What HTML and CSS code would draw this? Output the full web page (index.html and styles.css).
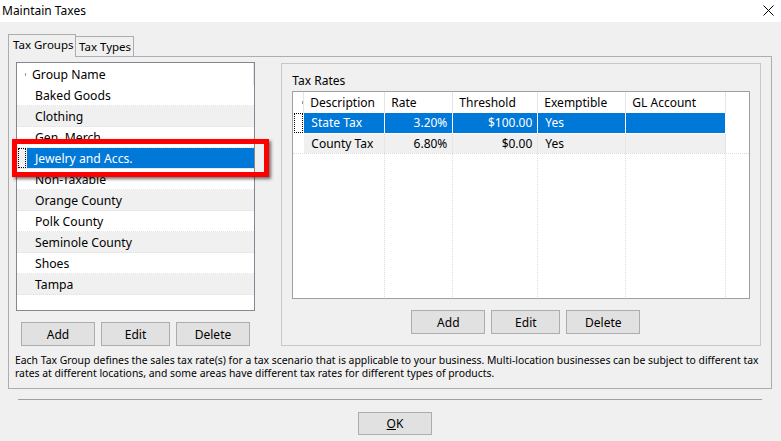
FILE: index.html
```html
<!DOCTYPE html>
<html>
<head>
<meta charset="utf-8">
<link rel="stylesheet" href="styles.css">
</head>
<body>
<div class="window">
  <div class="titlebar">
    <span class="title">Maintain Taxes</span>
    <svg class="close" width="11" height="11" viewBox="0 0 11 11"><path d="M0.5 0.5 L10.5 10.5 M10.5 0.5 L0.5 10.5" stroke="#000" stroke-width="1" fill="none"/></svg>
  </div>
  <div class="dialog">
    <div class="tabs">
      <div class="tab active">Tax Groups</div>
      <div class="tab">Tax Types</div>
    </div>
    <div class="panel">
      <div class="panel-body">
        <div class="left-col">
          <div class="listbox">
            <div class="lrow lheader"><span class="rh"><i class="tick"></i></span><span class="lcell hcell">Group Name</span></div>
            <div class="lrow"><span class="rh"></span><span class="lcell">Baked Goods</span></div>
            <div class="lrow alt"><span class="rh"></span><span class="lcell">Clothing</span></div>
            <div class="lrow"><span class="rh"></span><span class="lcell">Gen. Merch</span></div>
            <div class="lrow alt sel"><span class="rh"><i class="focus"></i></span><span class="lcell">Jewelry and Accs.</span></div>
            <div class="lrow"><span class="rh"></span><span class="lcell">Non-Taxable</span></div>
            <div class="lrow alt"><span class="rh"></span><span class="lcell">Orange County</span></div>
            <div class="lrow"><span class="rh"></span><span class="lcell">Polk County</span></div>
            <div class="lrow alt"><span class="rh"></span><span class="lcell">Seminole County</span></div>
            <div class="lrow"><span class="rh"></span><span class="lcell">Shoes</span></div>
            <div class="lrow alt"><span class="rh"></span><span class="lcell">Tampa</span></div>
          </div>
          <div class="btnrow left-btns">
            <button class="btn w74">Add</button>
            <button class="btn w69">Edit</button>
            <button class="btn w74">Delete</button>
          </div>
        </div>
        <div class="groupbox">
          <div class="gb-label">Tax Rates</div>
          <div class="grid">
            <div class="grow ghead">
              <span class="gc c-rh"><i class="tick"></i></span>
              <span class="gc c-desc">Description</span>
              <span class="gc c-rate">Rate</span>
              <span class="gc c-thr">Threshold</span>
              <span class="gc c-ex">Exemptible</span>
              <span class="gc c-gl">GL Account</span>
            </div>
            <div class="grow gsel">
              <span class="gc c-rh"><i class="focus"></i></span>
              <span class="gc c-desc">State Tax</span>
              <span class="gc c-rate num">3.20%</span>
              <span class="gc c-thr num">$100.00</span>
              <span class="gc c-ex">Yes</span>
              <span class="gc c-gl"></span>
            </div>
            <div class="grow galt">
              <span class="gc c-rh"></span>
              <span class="gc c-desc">County Tax</span>
              <span class="gc c-rate num">6.80%</span>
              <span class="gc c-thr num">$0.00</span>
              <span class="gc c-ex">Yes</span>
              <span class="gc c-gl"></span>
            </div>
            <div class="grow gempty">
              <span class="gc c-rh"></span>
              <span class="gc c-desc"></span>
              <span class="gc c-rate"></span>
              <span class="gc c-thr"></span>
              <span class="gc c-ex"></span>
              <span class="gc c-gl"></span>
            </div>
          </div>
          <div class="btnrow grid-btns">
            <button class="btn w74">Add</button>
            <button class="btn w69">Edit</button>
            <button class="btn w74">Delete</button>
          </div>
        </div>
      </div>
      <p class="desc">Each Tax Group defines the sales tax rate(s) for a tax scenario that is applicable to your business. Multi-location businesses can be subject to different tax<br>rates at different locations, and some areas have different tax rates for different types of products.</p>
    </div>
    <div class="sep"></div>
    <div class="footer">
      <button class="btn ok"><u>O</u>K</button>
    </div>
  </div>
  <div class="annot"></div>
</div>
</body>
</html>
```

FILE: styles.css
```css
* { box-sizing: border-box; }
html, body { margin: 0; padding: 0; }
body {
  width: 781px;
  height: 441px;
  overflow: hidden;
  font-family: "Noto Sans", "Open Sans", sans-serif;
  font-size: 12px;
  color: #000;
  background: #f0f0f0;
}
.window { position: relative; width: 781px; height: 441px; }

.titlebar {
  height: 22px;
  background: #fff;
  display: flex;
  align-items: center;
  justify-content: space-between;
  padding: 0 7px 1px 2px;
}
.title { font-size: 12px; }
.close { display: block; }

.dialog { background: #f0f0f0; height: 419px; }

.tabs {
  display: flex;
  align-items: flex-end;
  padding: 12px 0 0 8px;
  height: 34px;
  position: relative;
  z-index: 2;
}
.tab {
  height: 20px;
  width: 58px;
  border: 1px solid #adadad;
  border-left: none;
  border-bottom: none;
  padding: 0 0 0 3px;
  line-height: 19px;
  background: #f0f0f0;
  white-space: nowrap;
  font-size: 11.5px;
}
.tab.active {
  height: 23px;
  width: 68px;
  padding: 0 0 0 4px;
  line-height: 20px;
  margin-bottom: -1px;
  border-left: 1px solid #adadad;
}

.panel {
  margin: 0 9px 0 8px;
  height: 333px;
  border: 1px solid #adadad;
  padding: 5px 10px 0 7px;
}
.panel-body { display: flex; align-items: flex-start; }

.left-col { width: 240px; }
.listbox {
  height: 249px;
  border: 1px solid #828790;
  background: #fff;
}
.lrow {
  display: flex;
  height: 21px;
  width: 237px;
  border-bottom: 1px dotted #e2e2e2;
}
.lrow.lheader { height: 22px; border-bottom: none; }
.lrow.alt { background: #f0f0f0; }
.rh { width: 10px; flex: none; position: relative; }
.lcell { flex: 1; padding: 1px 0 0 8px; line-height: 20px; font-size: 12.2px; white-space: nowrap; overflow: visible; }
.hcell { padding: 1px 0 0 5px; line-height: 22px; border-right: 1px solid #e5e5e5; }
.lrow.sel .lcell { background: #0078d7; color: #fff; }
.tick {
  position: absolute;
  right: 1px;
  top: 10px;
  width: 1px;
  height: 3px;
  background: #999;
}
.focus {
  position: absolute;
  left: 1px;
  top: 0;
  width: 8px;
  height: 20px;
  border: 1px dotted #000;
}

.btnrow { display: flex; gap: 6px; }
.left-btns { margin-top: 11px; padding-left: 5px; }
.btn {
  height: 24px;
  background: #e1e1e1;
  border: 1px solid #adadad;
  font-family: inherit;
  font-size: 12px;
  color: #000;
  padding: 0;
  margin: 0;
}
.w74 { width: 74px; }
.w69 { width: 69px; }

.groupbox {
  margin-left: 26px;
  margin-top: 1px;
  width: 481px;
  height: 283px;
  border: 1px solid #c8c8c8;
  padding: 8px 0 0 10px;
}
.gb-label { line-height: 17px; height: 19px; }
.grid {
  width: 458px;
  height: 208px;
  border: 1px solid #a0a0a0;
  background: #fff;
}
.grow { display: flex; height: 21px; }
.ghead { height: 21px; }
.gc {
  flex: none;
  height: 100%;
  line-height: 20px;
  white-space: nowrap;
  position: relative;
  padding-left: 7px;
}
.ghead .gc { border-right: 1px solid #e5e5e5; padding-left: 6px; line-height: 21px; }
.c-rh { width: 11px; padding: 0 !important; }
.c-desc { width: 81px; }
.c-rate { width: 68px; }
.c-thr { width: 85px; }
.c-ex { width: 88px; }
.c-gl { width: 100px; }
.num { text-align: right; padding-left: 0; padding-right: 5px; }
.gsel .gc, .galt .gc, .gempty .gc { border-right: 1px dotted #dcdcdc; }
.gsel { height: 20px; }
.gsel .gc:not(.c-rh) { background: #0078d7; color: #fff; border-right: 1px solid #fff; }
.gsel .c-rh { border-right: none; }
.galt .gc:not(.c-rh) { background: #f0f0f0; }
.galt { border-top: 1px solid #fff; border-bottom: 1px dotted #dcdcdc; }
.galt .c-rh, .gempty .c-rh { border-right: none; }
.gempty { height: 143px; }
.grid .focus { left: 1px; width: 9px; top: 0; height: 20px; }
.grid .tick { top: 9px; right: 0; }

.grid-btns { margin-top: 11px; margin-left: 119px; }

.desc {
  margin: 8px 0 0 -1px;
  line-height: 13px;
  font-size: 10.4px;
  white-space: nowrap;
}

.sep {
  margin: 10px 19px 0 18px;
  height: 1px;
  background: #a0a0a0;
}
.footer { display: flex; padding: 12px 0 0 358px; }
.ok { width: 74px; height: 23px; }

.annot {
  position: absolute;
  left: 12px;
  top: 139px;
  width: 257px;
  height: 38px;
  border: 5px solid #ff0000;
  box-shadow: 2px 2px 3px rgba(0,0,0,0.55);
}
```
